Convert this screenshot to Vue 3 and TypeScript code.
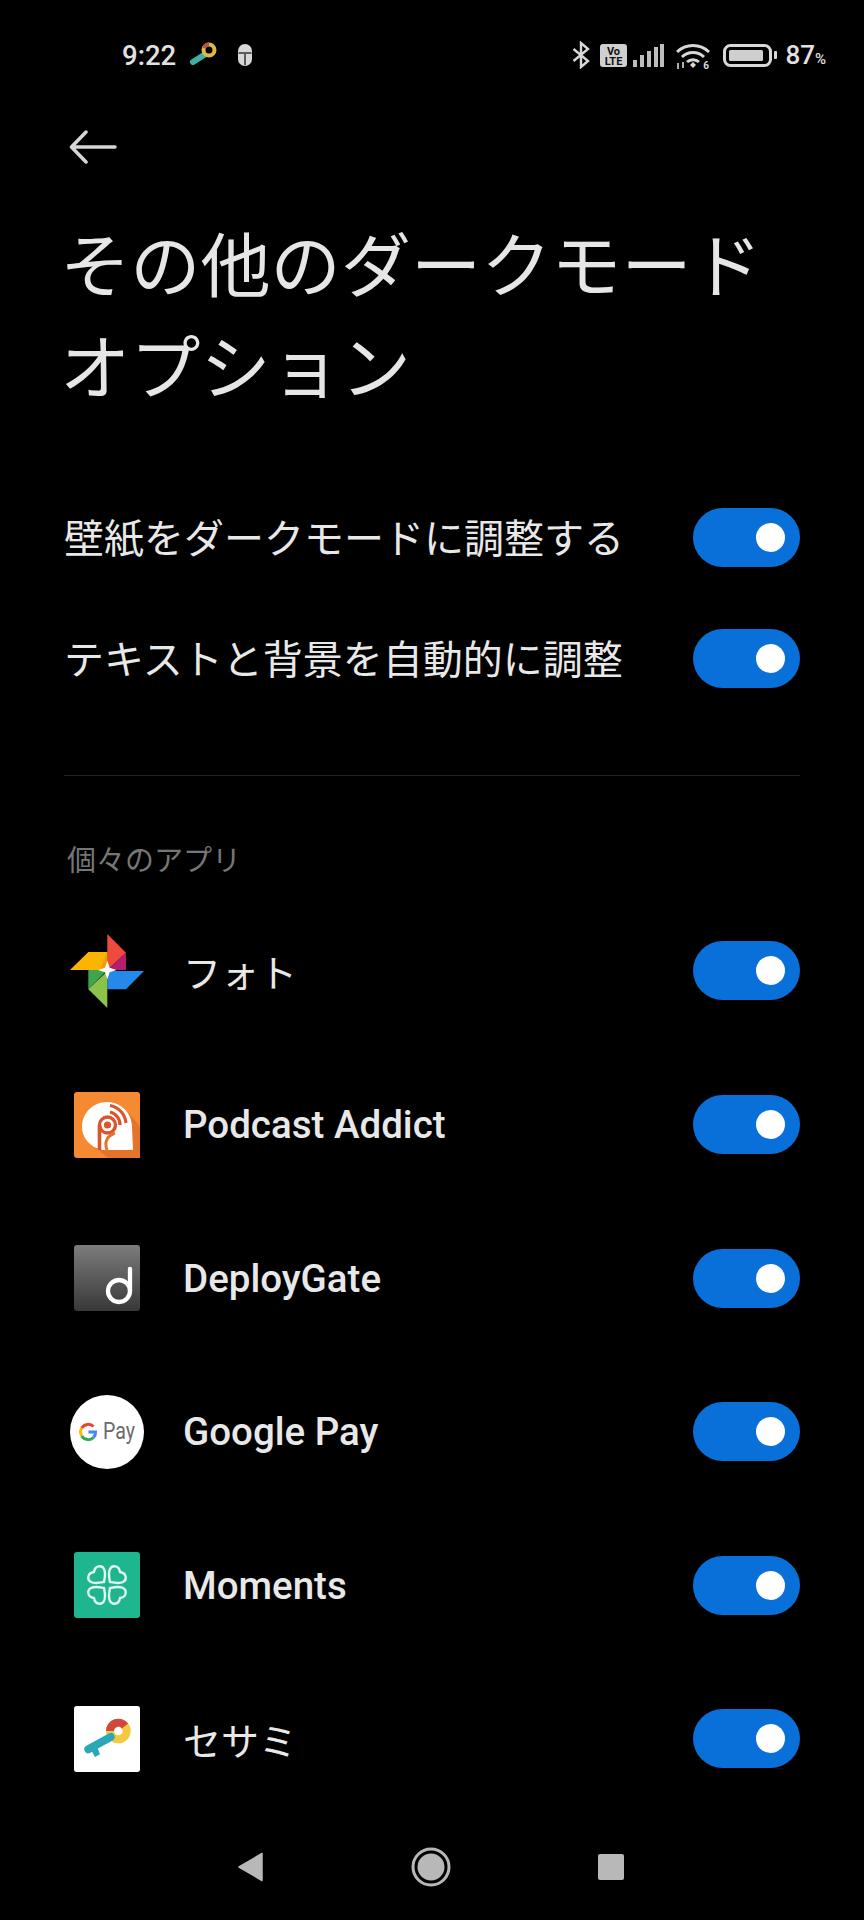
<script setup lang="ts">
const options = ['壁紙をダークモードに調整する', 'テキストと背景を自動的に調整']
const apps = [
  { id: 'photos', name: 'フォト' },
  { id: 'podcast', name: 'Podcast Addict' },
  { id: 'deploygate', name: 'DeployGate' },
  { id: 'gpay', name: 'Google Pay' },
  { id: 'moments', name: 'Moments' },
  { id: 'sesami', name: 'セサミ' }
]
const petals = [0, 90, 180, 270]
const bars = [
  { x: 0, y: 16, h: 7 },
  { x: 7, y: 11, h: 12 },
  { x: 14, y: 7, h: 16 },
  { x: 21, y: 3, h: 20 },
  { x: 27, y: 0, h: 23 }
]
</script>

<template>
  <div class="page">
    <div class="status">
      <div class="status-left">
        <span class="time">9:22</span>
        <svg class="st-key" width="28" height="28" viewBox="0 0 28 28">
          <path d="M15 14 L4 21" stroke="#3fb0a8" stroke-width="6" stroke-linecap="round" />
          <circle cx="20" cy="9" r="5.5" fill="none" stroke="#e0b84a" stroke-width="4" />
          <path d="M15 7 A5.5 5.5 0 0 1 20 3.500" fill="none" stroke="#b0553f" stroke-width="4" />
        </svg>
        <svg class="st-lock" width="16" height="24" viewBox="0 0 16 24">
          <rect x="1" y="1" width="14" height="22" rx="7" fill="#d8d8d8" />
          <path d="M1.500 10 H14.500 M8 11 V22" stroke="#333" stroke-width="1.500" />
        </svg>
      </div>
      <div class="status-right">
        <svg width="18" height="28" viewBox="0 0 18 28">
          <path d="M1.500 8 L16 20 L9 26 V2 L16 8 L1.500 20" fill="none" stroke="#d8d8d8" stroke-width="2.400" />
        </svg>
        <svg class="st-volte" width="27" height="23" viewBox="0 0 27 23">
          <rect width="27" height="23" rx="3" fill="#d0d0d0" />
          <text x="13.500" y="10.500" text-anchor="middle" class="volte">Vo</text>
          <text x="13.500" y="20.500" text-anchor="middle" class="volte">LTE</text>
        </svg>
        <svg class="st-signal" width="31" height="23" viewBox="0 0 31 23">
          <rect v-for="b in bars" :key="b.x" :x="b.x" :y="b.y" width="4" :height="b.h" fill="#bdbdbd" />
        </svg>
        <svg class="st-wifi" width="36" height="27" viewBox="0 0 36 27">
          <path d="M1 10 A23 23 0 0 1 33 10 M6 15 A16 16 0 0 1 28 15 M11 20 A9 9 0 0 1 23 20" fill="none" stroke="#d8d8d8" stroke-width="3" />
          <path d="M14 23 L17 20 L20 23 L17 26 Z" fill="#d8d8d8" />
          <path d="M2 21 V27 M7 20 V26" stroke="#d8d8d8" stroke-width="1.600" />
          <text x="30" y="26.500" text-anchor="middle" class="wifi-six">6</text>
        </svg>
        <svg class="st-battery" width="55" height="23" viewBox="0 0 55 23">
          <rect x="1.500" y="1.500" width="46" height="20" rx="6" fill="none" stroke="#d8d8d8" stroke-width="3" />
          <rect x="6" y="6" width="34" height="11" rx="1.500" fill="#cfcfcf" />
          <rect x="51" y="7" width="3" height="8" rx="1" fill="#d8d8d8" />
        </svg>
        <span class="level">87<small>%</small></span>
      </div>
    </div>

    <div class="back">
      <svg width="48" height="34" viewBox="0 0 48 34">
        <path d="M46 17 H3 M17 2 L2.500 17 L17 32" fill="none" stroke="#d6d6d6" stroke-width="3.500" stroke-linecap="round" stroke-linejoin="round" />
      </svg>
    </div>

    <h1 class="title">その他のダークモード<br />オプション</h1>

    <div class="options">
      <div v-for="o in options" :key="o" class="option">
        <span class="option-label">{{ o }}</span>
        <div class="toggle"><span class="knob"></span></div>
      </div>
    </div>

    <div class="divider"></div>

    <div class="section">個々のアプリ</div>

    <div class="apps">
      <div v-for="app in apps" :key="app.id" class="app">
        <div class="icon">
          <svg v-if="app.id === 'photos'" width="74" height="74" viewBox="60 42 222 222">
            <path d="M172 42 L228 98 L172 150 Z" fill="#ef4a3c" />
            <path d="M228 98 V150 H172 Z" fill="#b81c6e" />
            <path d="M60 150 L115 96 H172 V150 Z" fill="#fbb400" />
            <path d="M172 96 V150 H150 Z" fill="#f79a0a" />
            <path d="M172 153 H282 L228 208 H172 Z" fill="#2489ea" />
            <path d="M115 150 H172 L115 208 Z" fill="#3fa44f" />
            <path d="M115 208 L172 153 V264 Z" fill="#8bc34a" />
            <path d="M172 122 L179 143 L200 150 L179 157 L172 178 L165 157 L144 150 L165 143 Z" fill="#fff" />
          </svg>

          <svg v-else-if="app.id === 'podcast'" class="square" width="66" height="66" viewBox="0 0 66 66">
            <rect width="66" height="66" rx="3" fill="#f58a33" />
            <path d="M50 16 L66 34 V66 H34 L22 56 Z" fill="#e4742a" />
            <path d="M59 58 H28 C16 55 8 46 8 35 C8 21 19 10 33 10 C47 10 58 21 58 35 Z" fill="#fff" />
            <circle cx="33.500" cy="33" r="8" fill="none" stroke="#d9552b" stroke-width="3.400" />
            <path d="M25.500 33 V58" stroke="#d9552b" stroke-width="3.600" />
            <path d="M33 58 C30 50 33 44 41 41" fill="none" stroke="#e4742a" stroke-width="3" />
            <circle cx="33.500" cy="33" r="3.600" fill="#d9552b" />
            <path d="M36 20 A13 13 0 0 1 46 33 M36 13.500 A19.500 19.500 0 0 1 52 31" fill="none" stroke="#d9552b" stroke-width="3.200" />
          </svg>

          <svg v-else-if="app.id === 'deploygate'" class="square" width="66" height="66" viewBox="0 0 66 66">
            <defs>
              <linearGradient id="dg" x1="0" y1="0" x2="0" y2="1">
                <stop offset="0" stop-color="#7c7c7c" />
                <stop offset="1" stop-color="#383838" />
              </linearGradient>
            </defs>
            <rect width="66" height="66" rx="3" fill="url(#dg)" />
            <circle cx="45" cy="46" r="11" fill="none" stroke="#fff" stroke-width="4.300" />
            <path d="M56 46 V24" stroke="#fff" stroke-width="4.300" stroke-linecap="round" />
          </svg>

          <svg v-else-if="app.id === 'gpay'" width="74" height="74" viewBox="0 0 74 74">
            <circle cx="37" cy="37" r="37" fill="#fff" />
            <path d="M11.800 33 A7.500 7.500 0 0 0 11.800 41" fill="none" stroke="#fbbc04" stroke-width="3" />
            <path d="M11.800 33 A7.500 7.500 0 0 1 23.500 31.500" fill="none" stroke="#ea4335" stroke-width="3" />
            <path d="M11.800 41 A7.500 7.500 0 0 0 23.500 42.500" fill="none" stroke="#34a853" stroke-width="3" />
            <path d="M18.500 37 H25.500 A7.500 7.500 0 0 1 23.500 42.500" fill="none" stroke="#4285f4" stroke-width="3" />
            <text x="33" y="44" class="pay" textLength="32" lengthAdjust="spacingAndGlyphs">Pay</text>
          </svg>

          <svg v-else-if="app.id === 'moments'" class="square" width="66" height="66" viewBox="-33 -33 66 66">
            <rect x="-33" y="-33" width="66" height="66" rx="3" fill="#1fb68f" />
            <path
              v-for="r in petals"
              :key="r"
              d="M3 -3 C2 -8 1 -12 3 -16 C5 -20 12 -20 13 -13 C20 -12 20 -5 16 -3 C12 -1 8 -2 3 -3 Z"
              :transform="`rotate(${r})`"
              fill="none"
              stroke="#dff7ef"
              stroke-width="2.400"
              stroke-linejoin="round"
            />
          </svg>

          <svg v-else class="square" width="66" height="66" viewBox="72 515 198 198">
            <rect x="72" y="515" width="198" height="198" rx="8" fill="#fff" />
            <circle cx="205" cy="590" r="25" fill="none" stroke="#f3c93f" stroke-width="24" />
            <path d="M180 590 A25 25 0 0 1 225 575" fill="none" stroke="#d2473f" stroke-width="24" />
            <path d="M182 608 L115 645" stroke="#2ba8b8" stroke-width="24" stroke-linecap="round" />
            <path d="M125 650 L135 668 L150 660 L143 642 Z" fill="#2ba8b8" />
          </svg>
        </div>
        <span class="app-name" :class="{ latin: !/[ァ-ヶ]/.test(app.name) }">{{ app.name }}</span>
        <div class="toggle"><span class="knob"></span></div>
      </div>
    </div>

    <div class="nav">
      <svg width="26" height="30" viewBox="0 0 26 30">
        <path d="M25 1.500 V28.500 L2 15 Z" fill="#b8b8b8" stroke="#b8b8b8" stroke-width="1.500" stroke-linejoin="round" />
      </svg>
      <svg width="40" height="40" viewBox="0 0 40 40">
        <circle cx="20" cy="20" r="18" fill="none" stroke="#b8b8b8" stroke-width="3" />
        <circle cx="20" cy="20" r="13.500" fill="#b8b8b8" />
      </svg>
      <div class="stop"></div>
    </div>
  </div>
</template>

<style scoped>
.page {
  width: 864px;
  height: 1920px;
  overflow: hidden;
  background: #000;
  color: #e8e8e8;
  font-family: "Noto Sans CJK JP", "Noto Sans", sans-serif;
}
.status {
  height: 110px;
  box-sizing: border-box;
  padding: 0 38px 0 122px;
  display: flex;
  align-items: center;
  justify-content: space-between;
}
.status-left,
.status-right {
  display: flex;
  align-items: center;
}
.time {
  font: 500 27.500px Roboto, sans-serif;
  color: #e2e2e2;
}
.st-key {
  margin-left: 13px;
}
.st-lock {
  margin-left: 20px;
}
.st-volte {
  margin-left: 10px;
}
.st-signal {
  margin-left: 6px;
}
.st-wifi {
  margin-left: 12px;
}
.st-battery {
  margin-left: 11px;
}
.volte {
  font: 700 11px Roboto, sans-serif;
  fill: #111;
}
.wifi-six {
  font: 700 10px Roboto, sans-serif;
  fill: #d8d8d8;
}
.level {
  margin-left: 7px;
  font: 500 26px Roboto, sans-serif;
  color: #e2e2e2;
}
.level small {
  font-size: 15px;
}
.back {
  height: 74px;
  padding-left: 69px;
  display: flex;
  align-items: center;
}
.title {
  margin: 27px 0 0;
  padding-left: 60px;
  font-size: 70.200px;
  font-weight: 400;
  line-height: 102px;
  color: #e6e6e6;
}
.options {
  margin-top: 62.200px;
  padding: 0 64px;
}
.option {
  height: 121px;
  display: flex;
  align-items: center;
  justify-content: space-between;
}
.option-label {
  font-size: 40px;
  margin-top: -3px;
}
.toggle {
  width: 107px;
  height: 59px;
  box-sizing: border-box;
  padding-right: 15px;
  border-radius: 30px;
  background: #0870d8;
  display: flex;
  align-items: center;
  justify-content: flex-end;
}
.knob {
  width: 29px;
  height: 29px;
  border-radius: 50%;
  background: #fff;
}
.divider {
  margin: 56px 64px 0;
  height: 1px;
  background: #222;
}
.section {
  margin-top: 62px;
  padding-left: 67px;
  font-size: 29px;
  line-height: 40px;
  color: #767676;
}
.apps {
  margin-top: 16px;
  padding: 0 64px 0 70px;
}
.app {
  height: 153.600px;
  display: flex;
  align-items: center;
}
.icon {
  width: 74px;
  height: 74px;
  display: flex;
  align-items: center;
  justify-content: center;
}
.app-name {
  flex: 1;
  margin-left: 39px;
  font-size: 38px;
}
.app-name.latin {
  font-family: Roboto, sans-serif;
  font-weight: 500;
  font-size: 38.500px;
}
.pay {
  font: 400 23px Roboto, sans-serif;
  fill: #6b6b6b;
}
.nav {
  height: 103px;
  padding: 0 240px 0 237px;
  display: flex;
  align-items: center;
  justify-content: space-between;
}
.stop {
  width: 26px;
  height: 26px;
  border-radius: 2px;
  background: #b8b8b8;
}
</style>
